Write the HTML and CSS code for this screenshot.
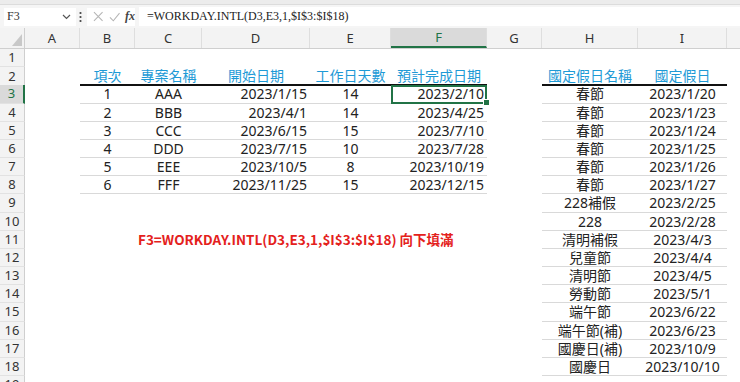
FILE: index.html
```html
<!DOCTYPE html>
<html lang="zh-Hant">
<head>
  <meta charset="UTF-8">
  <title>WORKDAY.INTL</title>
  <link rel="stylesheet" href="styles.css">
</head>
<body>
  <div class="topstrip"></div>

  <div class="fbar">
    <div class="namebox">
      <span>F3</span>
      <svg class="chev" width="9" height="6" viewBox="0 0 9 6"><path d="M1 1l3.5 3.5L8 1" fill="none" stroke="#555" stroke-width="1.2"/></svg>
    </div>
    <svg class="grip" width="3" height="12" viewBox="0 0 3 12"><circle cx="1.5" cy="2" r="1.1" fill="#444"/><circle cx="1.5" cy="6" r="1.1" fill="#444"/><circle cx="1.5" cy="10" r="1.1" fill="#444"/></svg>
    <div class="fbtns">
      <svg width="11" height="11" viewBox="0 0 11 11"><path d="M1 1l9 9M10 1l-9 9" stroke="#b5b5b5" stroke-width="1.1"/></svg>
      <svg width="12" height="10" viewBox="0 0 12 10"><path d="M1 5.5l3.5 3.5L11 1" fill="none" stroke="#b5b5b5" stroke-width="1.1"/></svg>
      <span class="fx">fx</span>
    </div>
    <div class="formula">=WORKDAY.INTL(D3,E3,1,$I$3:$I$18)</div>
  </div>

  <div class="sheet">
    <div class="row colhead">
      <div class="corner"><svg width="10" height="12" viewBox="0 0 10 12"><path d="M10 0v12H0z" fill="#c8c8c8"/></svg></div>
      <div>A</div><div>B</div><div>C</div><div>D</div><div>E</div>
      <div class="sel">F</div><div>G</div><div>H</div><div>I</div><div class="last"></div>
    </div>

    <div class="row"><div class="rh">1</div></div>

    <div class="row">
      <div class="rh">2</div>
      <div class="cell b ctr hd">項次</div>
      <div class="cell c ctr hd">專案名稱</div>
      <div class="cell d ctr hd">開始日期</div>
      <div class="cell e ctr hd">工作日天數</div>
      <div class="cell f ctr hd">預計完成日期</div>
      <div class="cell h ctr hd">國定假日名稱</div>
      <div class="cell i ctr hd">國定假日</div>
    </div>

    <div class="row">
      <div class="rh rh-sel">3</div>
      <div class="cell b ctr t">1</div>
      <div class="cell c ctr t">AAA</div>
      <div class="cell d rt t">2023/1/15</div>
      <div class="cell e ctr t">14</div>
      <div class="cell f rt t active">2023/2/10</div>
      <div class="cell h ctr t">春節</div>
      <div class="cell i ctr t">2023/1/20</div>
    </div>

    <div class="row">
      <div class="rh">4</div>
      <div class="cell b ctr t">2</div>
      <div class="cell c ctr t">BBB</div>
      <div class="cell d rt t">2023/4/1</div>
      <div class="cell e ctr t">14</div>
      <div class="cell f rt t">2023/4/25</div>
      <div class="cell h ctr t">春節</div>
      <div class="cell i ctr t">2023/1/23</div>
    </div>

    <div class="row">
      <div class="rh">5</div>
      <div class="cell b ctr t">3</div>
      <div class="cell c ctr t">CCC</div>
      <div class="cell d rt t">2023/6/15</div>
      <div class="cell e ctr t">15</div>
      <div class="cell f rt t">2023/7/10</div>
      <div class="cell h ctr t">春節</div>
      <div class="cell i ctr t">2023/1/24</div>
    </div>

    <div class="row">
      <div class="rh">6</div>
      <div class="cell b ctr t">4</div>
      <div class="cell c ctr t">DDD</div>
      <div class="cell d rt t">2023/7/15</div>
      <div class="cell e ctr t">10</div>
      <div class="cell f rt t">2023/7/28</div>
      <div class="cell h ctr t">春節</div>
      <div class="cell i ctr t">2023/1/25</div>
    </div>

    <div class="row">
      <div class="rh">7</div>
      <div class="cell b ctr t">5</div>
      <div class="cell c ctr t">EEE</div>
      <div class="cell d rt t">2023/10/5</div>
      <div class="cell e ctr t">8</div>
      <div class="cell f rt t">2023/10/19</div>
      <div class="cell h ctr t">春節</div>
      <div class="cell i ctr t">2023/1/26</div>
    </div>

    <div class="row">
      <div class="rh">8</div>
      <div class="cell b ctr t">6</div>
      <div class="cell c ctr t">FFF</div>
      <div class="cell d rt t">2023/11/25</div>
      <div class="cell e ctr t">15</div>
      <div class="cell f rt t">2023/12/15</div>
      <div class="cell h ctr t">春節</div>
      <div class="cell i ctr t">2023/1/27</div>
    </div>

    <div class="row">
      <div class="rh">9</div>
      <div class="cell h ctr t">228補假</div>
      <div class="cell i ctr t">2023/2/25</div>
    </div>

    <div class="row">
      <div class="rh">10</div>
      <div class="cell h ctr t">228</div>
      <div class="cell i ctr t">2023/2/28</div>
    </div>

    <div class="row">
      <div class="rh">11</div>
      <div class="cell c note">F3=WORKDAY.INTL(D3,E3,1,$I$3:$I$18) 向下填滿</div>
      <div class="cell h ctr t">清明補假</div>
      <div class="cell i ctr t">2023/4/3</div>
    </div>

    <div class="row">
      <div class="rh">12</div>
      <div class="cell h ctr t">兒童節</div>
      <div class="cell i ctr t">2023/4/4</div>
    </div>

    <div class="row">
      <div class="rh">13</div>
      <div class="cell h ctr t">清明節</div>
      <div class="cell i ctr t">2023/4/5</div>
    </div>

    <div class="row">
      <div class="rh">14</div>
      <div class="cell h ctr t">勞動節</div>
      <div class="cell i ctr t">2023/5/1</div>
    </div>

    <div class="row">
      <div class="rh">15</div>
      <div class="cell h ctr t">端午節</div>
      <div class="cell i ctr t">2023/6/22</div>
    </div>

    <div class="row">
      <div class="rh">16</div>
      <div class="cell h ctr t">端午節(補)</div>
      <div class="cell i ctr t">2023/6/23</div>
    </div>

    <div class="row">
      <div class="rh">17</div>
      <div class="cell h ctr t">國慶日(補)</div>
      <div class="cell i ctr t">2023/10/9</div>
    </div>

    <div class="row">
      <div class="rh">18</div>
      <div class="cell h ctr t">國慶日</div>
      <div class="cell i ctr t">2023/10/10</div>
    </div>

    <div class="row"><div class="rh">19</div></div>
  </div>
</body>
</html>
```

FILE: styles.css
```css
body {
  margin: 0;
  background: #fff;
  overflow: hidden;
  font-family: "Noto Sans", "Noto Sans CJK TC", sans-serif;
  color: #222;
}

/* ribbon edge + formula bar */
.topstrip {
  height: 4px;
  background: #ececec;
  border-bottom: 1px solid #dcdcdc;
}

.fbar {
  display: flex;
  align-items: center;
  height: 23px;
  background: #f5f5f5;
  padding-left: 4px;
}

.namebox {
  display: flex;
  align-items: center;
  justify-content: space-between;
  width: 72px;
  height: 18px;
  box-sizing: border-box;
  padding: 0 5px 0 3px;
  background: #fff;
  font-family: "Liberation Serif", serif;
  font-size: 12px;
  color: #333;
}

.grip {
  margin: 0 5px 0 3px;
}

.fbtns {
  display: flex;
  align-items: center;
  gap: 5px;
  width: 48px;
  height: 18px;
  box-sizing: border-box;
  padding-left: 6px;
  background: #fff;
}

.fx {
  font-family: "Liberation Serif", serif;
  font-style: italic;
  font-weight: bold;
  font-size: 12px;
  color: #444;
}

.formula {
  flex: 1;
  height: 19px;
  margin-left: 4px;
  padding-left: 8px;
  background: #fff;
  font-family: "Liberation Serif", serif;
  font-size: 12px;
  line-height: 19px;
  color: #222;
}

/* grid */
.row {
  display: grid;
  grid-template-columns: 25px 55px 55px 67px 108px 81px 96px 55px 96px 89px 1fr;
  height: 18.18px;
}

.row > * {
  grid-row: 1;
  box-sizing: border-box;
}

.colhead {
  height: 20px;
  background: #f3f3f3;
  border-bottom: 1px solid #cfcfcf;
  font-size: 13px;
  color: #333;
}

.colhead > div {
  display: flex;
  align-items: center;
  justify-content: center;
  border-right: 1px solid #dedede;
}

.colhead .corner {
  align-items: flex-end;
  justify-content: flex-end;
  padding: 0 2px 2px 0;
  border-right: 1px solid #cfcfcf;
}

.colhead .sel {
  background: #dadada;
  color: #217346;
  border-bottom: 2px solid #217346;
}

.colhead .last {
  border-right: none;
}

.rh {
  grid-column: 1;
  display: flex;
  align-items: center;
  justify-content: center;
  background: #f3f3f3;
  border-right: 1px solid #cfcfcf;
  border-bottom: 1px solid #e2e2e2;
  font-size: 13px;
  line-height: 17px;
  color: #333;
}

.rh-sel {
  background: #dadada;
  color: #217346;
  border-right: 2px solid #217346;
}

.cell {
  display: flex;
  align-items: center;
  padding: 0 3px;
  font-size: 14px;
  line-height: 17px;
  white-space: nowrap;
}

.b { grid-column: 3; }
.c { grid-column: 4; }
.d { grid-column: 5; }
.e { grid-column: 6; }
.f { grid-column: 7; }
.h { grid-column: 9; }
.i { grid-column: 10; }

.ctr { justify-content: center; }
.rt { justify-content: flex-end; }

.hd {
  color: #1e9ad6;
  border-bottom: 2px solid #111;
}

.t {
  border-bottom: 1px solid #d9d9d9;
}

.active {
  position: relative;
  outline: 2px solid #217346;
  outline-offset: -2px;
}

.active::after {
  content: "";
  position: absolute;
  right: -3px;
  bottom: -3px;
  width: 5px;
  height: 5px;
  background: #217346;
  border: 1px solid #fff;
}

.note {
  overflow: visible;
  font-family: "Noto Sans CJK TC", sans-serif;
  font-size: 13.5px;
  font-weight: bold;
  color: #e4211c;
}
```
